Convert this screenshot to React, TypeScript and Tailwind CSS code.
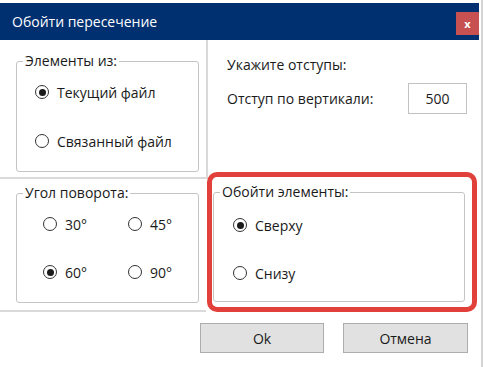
import type { ReactNode } from "react";

const font = { fontFamily: '"Open Sans", "Noto Sans", sans-serif' };

function Radio({ checked, label }: { checked?: boolean; label: string }) {
  return (
    <div className="flex h-[24px] items-center gap-[8px]">
      <span className="flex h-[14px] w-[14px] items-center justify-center rounded-full border border-[#333] bg-white">
        {checked && <span className="h-[7px] w-[7px] rounded-full bg-[#1a1a1a]" />}
      </span>
      <span>{label}</span>
    </div>
  );
}

function Group({
  title,
  className,
  children,
}: {
  title: string;
  className: string;
  children: ReactNode;
}) {
  return (
    <fieldset className={`rounded-[3px] border border-[#c4c4c4] ${className}`}>
      <legend className="ml-[6px] px-[2px] leading-[18px]">{title}</legend>
      {children}
    </fieldset>
  );
}

export default function App() {
  return (
    <div
      className="flex h-[367px] w-[484px] bg-white text-[14px] text-[#1a1a1a]"
      style={font}
    >
      <div className="flex w-[479px] flex-col">
        <div className="mt-[3px] flex h-[37px] items-center bg-[#00306f] pl-[12px] text-[14px] text-white">
          <span>Обойти пересечение</span>
          <span className="ml-auto mt-[4px] flex h-[23px] w-[23px] items-center justify-center bg-[#c75050] text-[11px] font-bold leading-none">
            x
          </span>
        </div>

        <div className="relative flex flex-1 flex-col">
          {/* top row */}
          <div className="flex">
            <div className="h-[139px] w-[206px] border-b-2 border-[#dadada] pl-[16px] pt-[12px]">
              <Group title="Элементы из:" className="h-[120px] w-[183px]">
                <div className="flex flex-col pl-[18px]">
                  <div className="mt-[10px]">
                    <Radio checked label="Текущий файл" />
                  </div>
                  <div className="mt-[25px]">
                    <Radio label="Связанный файл" />
                  </div>
                </div>
              </Group>
            </div>
            <div className="flex-1 border-l-2 border-[#dadada] pl-[19px] pt-[15px]">
              <p className="leading-[20px]">Укажите отступы:</p>
              <div className="mt-[8px] flex items-center">
                <span className="w-[181px]">Отступ по вертикали:</span>
                <div className="flex h-[31px] w-[59px] items-center justify-center border border-[#c2c2c2]">
                  500
                </div>
              </div>
            </div>
          </div>

          {/* middle row */}
          <div className="flex">
            <div className="h-[133px] w-[206px] border-b-2 border-[#dadada] pl-[16px] pt-[5px]">
              <Group title="Угол поворота:" className="h-[119px] w-[183px]">
                <div className="mt-[10px] grid grid-cols-[85px_1fr] gap-y-[24px] pl-[26px]">
                  <Radio label="30°" />
                  <Radio label="45°" />
                  <Radio checked label="60°" />
                  <Radio label="90°" />
                </div>
              </Group>
            </div>
            <div className="flex-1 pl-[7px] pt-[4px]">
              <Group title="Обойти элементы:" className="h-[119px] w-[252px]">
                <div className="flex flex-col pl-[19px]">
                  <div className="mt-[12px]">
                    <Radio checked label="Сверху" />
                  </div>
                  <div className="mt-[24px]">
                    <Radio label="Снизу" />
                  </div>
                </div>
              </Group>
            </div>
          </div>

          {/* buttons */}
          <div className="flex justify-end gap-[19px] pr-[11px] pt-[11px]">
            <button className="h-[30px] w-[124px] border border-[#adadad] bg-[#e1e1e1]">
              Ok
            </button>
            <button className="h-[30px] w-[125px] border border-[#adadad] bg-[#e1e1e1]">
              Отмена
            </button>
          </div>

          {/* highlight annotation */}
          <div className="pointer-events-none absolute left-[207px] top-[132px] h-[140px] w-[270px] rounded-[10px] border-[5px] border-[#e2403a]" />
        </div>
      </div>
      <div className="w-[2px]" />
      <div className="w-[2px] bg-[#d4d4d4]" />
    </div>
  );
}
